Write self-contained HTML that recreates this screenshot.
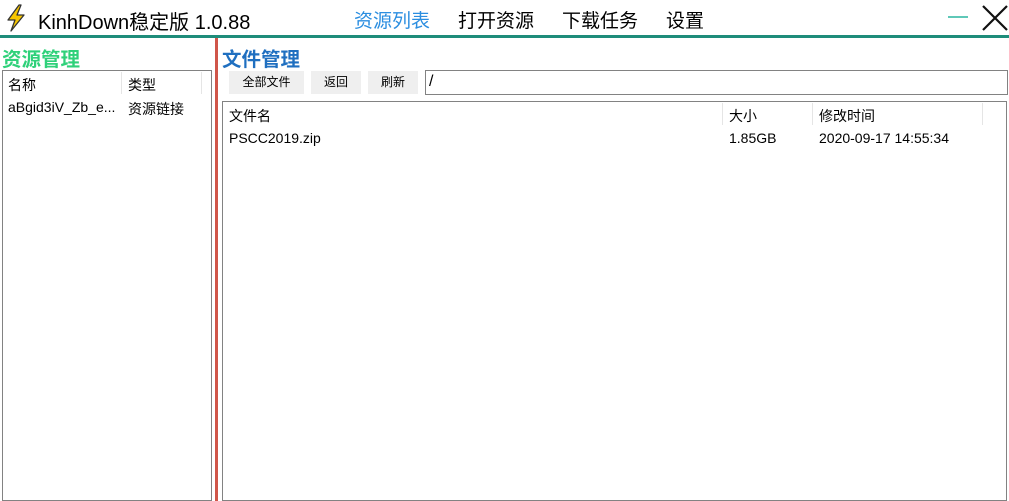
<!DOCTYPE html>
<html><head><meta charset="utf-8"><style>
*{margin:0;padding:0;box-sizing:border-box}
body{width:1009px;height:501px;background:#fff;position:relative;overflow:hidden;font-family:"Liberation Sans","Noto Sans CJK SC",sans-serif;color:#000}
.a{position:absolute;white-space:nowrap}
.nav{font-size:19px;top:6px}
.btn{position:absolute;top:71px;height:23px;background:#efefef;font-size:12px;text-align:center;line-height:23px}
.sm{font-size:14px}
</style></head><body>
<svg class="a" style="left:3px;top:3px" width="28" height="30" viewBox="0 0 28 30">
<path d="M16 2 L5 17 L12 17 L8 28 L21 12 L14 12 L18 2Z" fill="#f7c600" stroke="#333" stroke-width="1.3" stroke-linejoin="round"/>
</svg>
<div class="a" style="left:38px;top:6px;font-size:20px">KinhDown稳定版 1.0.88</div>
<div class="a nav" style="left:354px;color:#2b8ee0">资源列表</div>
<div class="a nav" style="left:458px">打开资源</div>
<div class="a nav" style="left:562px">下载任务</div>
<div class="a nav" style="left:666px">设置</div>
<div class="a" style="left:948px;top:16px;width:20px;height:2px;background:#5fc8b8"></div>
<svg class="a" style="left:981px;top:4px" width="28" height="28"><path d="M2 2L26 26M26 2L2 26" stroke="#111" stroke-width="2.2"/></svg>
<div class="a" style="left:0;top:35px;width:1009px;height:3px;background:#1e8c7a"></div>
<div class="a" style="left:2px;top:43px;font-size:19.5px;font-weight:bold;color:#2fd17a">资源管理</div>
<div class="a" style="left:2px;top:70px;width:210px;height:431px;border:1px solid #828282"></div>
<div class="a" style="left:121px;top:72px;width:1px;height:22px;background:#e5e5e5"></div>
<div class="a" style="left:201px;top:72px;width:1px;height:22px;background:#e5e5e5"></div>
<div class="a sm" style="left:8px;top:75px">名称</div>
<div class="a sm" style="left:128px;top:75px">类型</div>
<div class="a sm" style="left:8px;top:99px">aBgid3iV_Zb_e...</div>
<div class="a sm" style="left:128px;top:99px">资源链接</div>
<div class="a" style="left:215px;top:38px;width:3px;height:463px;background:#d0564a"></div>
<div class="a" style="left:222px;top:43px;font-size:19.5px;font-weight:bold;color:#1f6fc0">文件管理</div>
<div class="btn" style="left:229px;width:75px">全部文件</div>
<div class="btn" style="left:311px;width:50px">返回</div>
<div class="btn" style="left:368px;width:50px">刷新</div>
<div class="a" style="left:425px;top:70px;width:583px;height:25px;border:1px solid #828282;font-size:16px;padding:2px 3px">/</div>
<div class="a" style="left:222px;top:101px;width:785px;height:400px;border:1px solid #828282"></div>
<div class="a" style="left:722px;top:103px;width:1px;height:22px;background:#e5e5e5"></div>
<div class="a" style="left:812px;top:103px;width:1px;height:22px;background:#e5e5e5"></div>
<div class="a" style="left:982px;top:103px;width:1px;height:22px;background:#e5e5e5"></div>
<div class="a sm" style="left:229px;top:106px">文件名</div>
<div class="a sm" style="left:729px;top:106px">大小</div>
<div class="a sm" style="left:819px;top:106px">修改时间</div>
<div class="a sm" style="left:229px;top:130px">PSCC2019.zip</div>
<div class="a sm" style="left:729px;top:130px">1.85GB</div>
<div class="a sm" style="left:819px;top:130px">2020-09-17 14:55:34</div>
</body></html>
